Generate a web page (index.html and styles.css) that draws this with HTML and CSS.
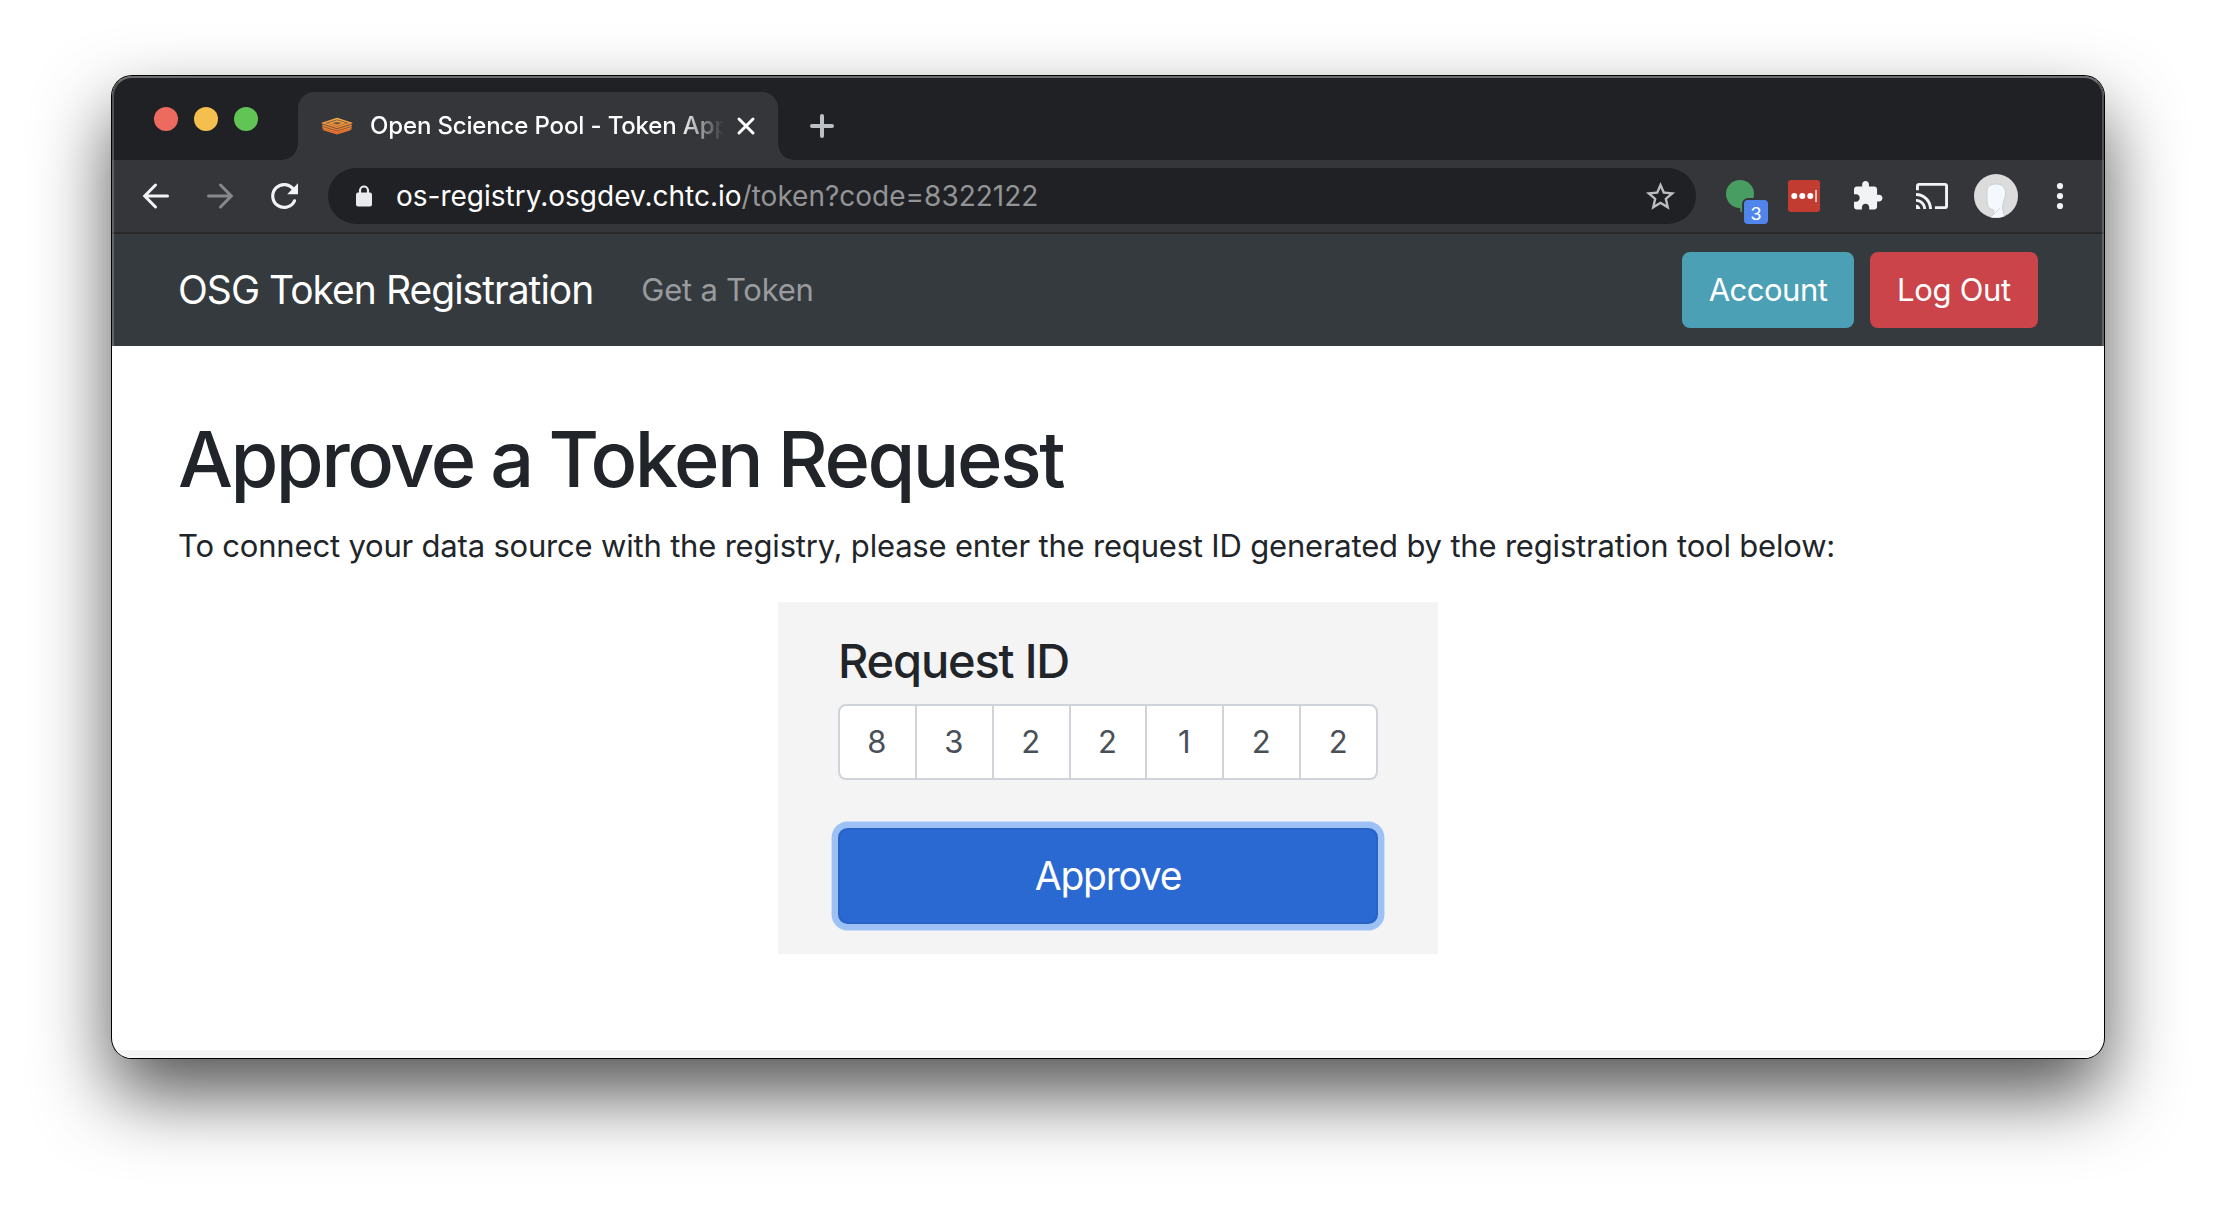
FILE: index.html
```html
<!DOCTYPE html>
<html lang="en">
<head>
<meta charset="utf-8">
<title>Open Science Pool - Token App</title>
<link rel="stylesheet" href="styles.css">
</head>
<body>
<div class="window">
  <div class="tabstrip">
    <div class="lights">
      <span class="light light-close"></span>
      <span class="light light-min"></span>
      <span class="light light-max"></span>
    </div>
    <div class="tab">
      <svg class="favicon" width="32" height="18" viewBox="0 0 32 18">
        <defs>
          <linearGradient id="fav" x1="0" y1="0" x2="0" y2="18" gradientUnits="userSpaceOnUse">
            <stop offset="0" stop-color="#f3b04b"/>
            <stop offset=".5" stop-color="#f08d38"/>
            <stop offset="1" stop-color="#e8652c"/>
          </linearGradient>
        </defs>
        <path d="M16 1 31 6V12.500L16 17 1 12.500V6z" fill="url(#fav)" opacity=".35"/>
        <g fill="none" stroke="url(#fav)" stroke-width="1.400">
          <path d="M16 1.500 30 6 16 10.500 2 6z"/>
          <path d="M16 4 23 6.200 16 8.400 9 6.200z"/>
          <path d="M1.500 8.400 16 12.800 30.500 8.400M1.500 10.600 16 15 30.500 10.600M2.500 12.700 16 16.700 29.500 12.700"/>
        </g>
      </svg>
      <span class="tab-title">Open Science Pool - Token App</span>
      <svg class="tab-close" width="20" height="20" viewBox="0 0 20 20"><path d="M3 3 17 17M17 3 3 17" stroke="#fff" stroke-width="3" stroke-linecap="round"/></svg>
    </div>
    <svg class="newtab" width="24" height="24" viewBox="0 0 24 24"><path d="M12 2V22M2 12H22" stroke="#bdc1c6" stroke-width="4" stroke-linecap="round"/></svg>
  </div>

  <div class="toolbar">
    <svg width="40" height="40" viewBox="0 0 40 40"><path d="M31.500 20H9M19.500 9 8.700 20 19.500 31" fill="none" stroke="#f1f3f4" stroke-width="3" stroke-linecap="round"/></svg>
    <svg width="40" height="40" viewBox="0 0 40 40"><path d="M8.500 20H31M20.500 9 31.300 20 20.500 31" fill="none" stroke="#87888a" stroke-width="3" stroke-linecap="round"/></svg>
    <svg width="40" height="40" viewBox="0 0 40 40"><path d="M29.500 13.500A11.400 11.400 0 1 0 30.500 24.800" fill="none" stroke="#f1f3f4" stroke-width="3.200" stroke-linecap="round"/><path d="M34 7.200V18.200H23.200z" fill="#f1f3f4"/></svg>
    <div class="omnibox">
      <svg class="lock" width="16" height="22" viewBox="0 0 16 22"><path d="M4 9V5.500a4 4 0 0 1 8 0V9" fill="none" stroke="#e8eaed" stroke-width="2.200"/><rect y="7.500" width="16" height="14" rx="2" fill="#e8eaed"/></svg>
      <span class="url"><span class="host">os-registry.osgdev.chtc.io</span>/token?code=8322122</span>
      <svg class="star" width="35" height="35" viewBox="0 0 24 24"><path fill="#bdbdbf" d="M22 9.240l-7.190-.62L12 2 9.190 8.630 2 9.240l5.460 4.730L5.820 21 12 17.270 18.180 21l-1.630-7.030L22 9.240zM12 15.400l-3.760 2.270 1-4.280-3.320-2.880 4.380-.38L12 6.100l1.710 4.040 4.380.38-3.320 2.880 1 4.280L12 15.400z"/></svg>
    </div>
    <div class="ext">
      <svg width="40" height="40" viewBox="0 0 40 40"><circle cx="20" cy="18" r="14" fill="#489d62"/><path d="M20 30H24V36H20.500z" fill="#489d62"/></svg>
      <span class="badge">3</span>
    </div>
    <svg width="40" height="40" viewBox="0 0 40 40"><rect x="4" y="4" width="32" height="32" rx="3" fill="#c23c31"/><circle cx="10.300" cy="20" r="3" fill="#fff"/><circle cx="18.300" cy="20" r="3" fill="#fff"/><circle cx="26.300" cy="20" r="3" fill="#fff"/><path d="M32 14V26" stroke="#f2c9c6" stroke-width="1.800"/></svg>
    <svg width="40" height="40" viewBox="0 0 40 40"><path transform="translate(3.300 3.700) scale(1.357)" fill="#f1f3f4" d="M20.500 11H19V7c0-1.100-.9-2-2-2h-4V3.500C13 2.120 11.880 1 10.500 1S8 2.120 8 3.500V5H4c-1.100 0-1.990.9-1.990 2v3.800H3.500c1.490 0 2.700 1.210 2.700 2.700s-1.210 2.700-2.700 2.700H2V20c0 1.100.9 2 2 2h3.800v-1.500c0-1.490 1.210-2.700 2.700-2.700 1.490 0 2.700 1.210 2.700 2.700V22H17c1.100 0 2-.9 2-2v-4h1.500c1.380 0 2.500-1.120 2.500-2.500S21.880 11 20.500 11z"/></svg>
    <svg width="40" height="40" viewBox="0 0 40 40"><path transform="translate(2.550 2.550) scale(1.4545)" fill="#f1f3f4" d="M21 3H3c-1.100 0-2 .9-2 2v3h2V5h18v14h-7v2h7c1.100 0 2-.9 2-2V5c0-1.100-.9-2-2-2zM1 18v3h3c0-1.660-1.340-3-3-3zm0-4v2c2.760 0 5 2.240 5 5h2c0-3.870-3.130-7-7-7zm0-4v2c4.970 0 9 4.030 9 9h2c0-6.080-4.930-11-11-11z"/></svg>
    <svg class="avatar" width="44" height="44" viewBox="0 0 44 44">
      <defs><clipPath id="face"><circle cx="22" cy="22" r="22"/></clipPath></defs>
      <g clip-path="url(#face)">
        <rect width="44" height="44" fill="#dcdcdc"/>
        <path d="M13 17C13 12 17 10 22 10S31.500 13 31.500 19C31.500 25 28 29 28.500 35L31 44H14C17 42 20 40 20 37.500 20 35 18 35.500 16 34.500 13 33 13 27 13 17z" fill="#f5f9fd" stroke="#c3c9cf" stroke-width=".8"/>
        <path d="M26 34 17 43" stroke="#d5dde4" stroke-width="1"/>
      </g>
    </svg>
    <svg width="40" height="40" viewBox="0 0 40 40" fill="#f1f3f4"><circle cx="20" cy="10" r="3.100"/><circle cx="20" cy="20" r="3.100"/><circle cx="20" cy="30" r="3.100"/></svg>
  </div>

  <nav class="navbar">
    <a class="brand">OSG Token Registration</a>
    <a class="navlink">Get a Token</a>
    <div class="actions">
      <a class="btn btn-info">Account</a>
      <a class="btn btn-danger">Log Out</a>
    </div>
  </nav>

  <main class="content">
    <h1>Approve a Token Request</h1>
    <p>To connect your data source with the registry, please enter the request ID generated by the registration tool below:</p>
    <form class="card">
      <label class="label">Request ID</label>
      <div class="digits">
        <span class="digit">8</span>
        <span class="digit">3</span>
        <span class="digit">2</span>
        <span class="digit">2</span>
        <span class="digit">1</span>
        <span class="digit">2</span>
        <span class="digit">2</span>
      </div>
      <button class="approve" type="button">Approve</button>
    </form>
  </main>
  <div class="statusbar"></div>
</div>
</body>
</html>
```
FILE: styles.css
```css
* { box-sizing: border-box; }

body {
  margin: 0;
  width: 2216px;
  height: 1206px;
  padding: 76px 112px 0;
  overflow: hidden;
  background: #fff;
  font-family: Inter, "Liberation Sans", sans-serif;
  color: #212529;
}

svg { display: block; flex: none; }

.window {
  position: relative;
  display: flex;
  flex-direction: column;
  width: 1992px;
  height: 982px;
  border-radius: 20px;
  overflow: hidden;
  background: #fff;
  box-shadow: 0 0 0 1px #000, 0 36px 74px rgba(0, 0, 0, .68);
}

/* light rim along the window edge */
.window::after {
  content: "";
  position: absolute;
  inset: 0;
  border: 2px solid rgba(255, 255, 255, .22);
  border-top-color: rgba(255, 255, 255, .35);
  border-radius: 20px;
  pointer-events: none;
}

.tabstrip {
  display: flex;
  height: 84px;
  padding: 16px 0 0 42px;
  background: #202124;
}

.lights {
  display: flex;
  gap: 16px;
  width: 144px;
  padding-top: 15px;
}

.light { width: 24px; height: 24px; border-radius: 50%; }
.light-close { background: #ed6a5f; }
.light-min { background: #f5bf4f; }
.light-max { background: #61c555; }

.tab {
  position: relative;
  display: flex;
  align-items: center;
  width: 480px;
  height: 68px;
  padding-left: 23px;
  border-radius: 16px 16px 0 0;
  background: #35363a;
}

.tab::before,
.tab::after {
  content: "";
  position: absolute;
  bottom: 0;
  width: 16px;
  height: 16px;
}
.tab::before { right: 100%; background: radial-gradient(circle at 0 0, transparent 15.5px, #35363a 16px); }
.tab::after { left: 100%; background: radial-gradient(circle at 100% 0, transparent 15.5px, #35363a 16px); }

.tab-title {
  width: 356px;
  margin-left: 17px;
  white-space: nowrap;
  font-size: 24px;
  font-weight: 450;
  line-height: 36px;
  letter-spacing: -.15px;
  color: #fff;
  -webkit-mask-image: linear-gradient(to right, #000 310px, transparent 354px);
  mask-image: linear-gradient(to right, #000 310px, transparent 354px);
}

.tab-close { margin-left: 10px; }
.newtab { margin: 22px 0 0 32px; }

.toolbar {
  display: flex;
  align-items: center;
  gap: 24px;
  height: 74px;
  padding: 0 24px;
  border-bottom: 2px solid #282828;
  background: #35363a;
}

.omnibox {
  display: flex;
  align-items: center;
  flex: 1;
  height: 56px;
  padding: 0 18px 0 28px;
  border-radius: 28px;
  background: #202124;
}

.url {
  flex: 1;
  margin-left: 24px;
  font-size: 28px;
  font-weight: 425;
  line-height: 40px;
  color: #939496;
}
.host { color: #fff; }

.ext { position: relative; }
.badge {
  position: absolute;
  left: 24px;
  top: 24px;
  width: 24px;
  height: 24px;
  border-radius: 4px;
  background: #5086ec;
  box-shadow: 0 0 0 2px #35363a;
  color: #fff;
  font: 19px/27px "Liberation Sans", sans-serif;
  text-align: center;
}

.avatar { margin: 0 -2px; }

.navbar {
  display: flex;
  align-items: center;
  height: 112px;
  padding: 0 66px;
  background: #353a3e;
}
.brand {
  font-size: 39px;
  font-weight: 440;
  line-height: 60px;
  letter-spacing: -.98px;
  color: #fff;
}
.navlink {
  margin-left: 48px;
  font-size: 31px;
  font-weight: 430;
  line-height: 48px;
  letter-spacing: -.25px;
  color: #999b9e;
}
.actions { display: flex; gap: 16px; margin-left: auto; }
.btn {
  height: 76px;
  border-radius: 8px;
  font-size: 31px;
  font-weight: 440;
  line-height: 76px;
  text-align: center;
  color: #fff;
}
.btn-info { width: 172px; background: #4ba0b5; letter-spacing: -.5px; }
.btn-danger { width: 168px; background: #ca444a; letter-spacing: -.3px; }

.content { flex: 1; padding: 65px 66px 0; }

h1 {
  margin: 0 0 15px;
  font-size: 77.5px;
  font-weight: 530;
  line-height: 96px;
  letter-spacing: -2.5px;
  word-spacing: -1.5px;
}

p {
  margin: 0 0 32px;
  font-size: 31px;
  font-weight: 420;
  line-height: 48px;
  letter-spacing: -.19px;
  white-space: nowrap;
}

.card {
  display: flex;
  flex-direction: column;
  width: 660px;
  height: 352px;
  margin-left: 600px;
  padding: 30px 60px;
  background: #f4f4f4;
}
.label {
  height: 58px;
  margin-bottom: 14px;
  font-size: 47px;
  font-weight: 530;
  line-height: 57px;
  letter-spacing: -1.19px;
}
.digits { display: flex; height: 76px; margin-bottom: 48px; }
.digit {
  flex: 1;
  border: 2px solid #ced4da;
  background: #fff;
  font-size: 31px;
  font-weight: 420;
  line-height: 72px;
  text-align: center;
  text-indent: -1px;
  color: #495057;
}
.digit + .digit { margin-left: -2px; }
.digit:first-child { border-radius: 8px 0 0 8px; }
.digit:last-child { border-radius: 0 8px 8px 0; }

.approve {
  height: 96px;
  padding: 0;
  border: 2px solid #2762c4;
  border-radius: 9.6px;
  background: #2a69d2;
  box-shadow: 0 0 0 6.4px #9dc1f5;
  font: 440 39px/92px Inter, "Liberation Sans", sans-serif;
  letter-spacing: -1.25px;
  color: #fff;
}

.statusbar { height: 8px; background: #f4f4f4; }
```
